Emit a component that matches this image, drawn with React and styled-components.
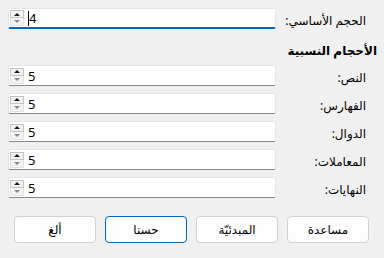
import styled, { createGlobalStyle } from "styled-components";

const Global = createGlobalStyle`
    html, body {
        margin: 0;
        background: #f0f0f0;
    }
    #root {
        width: 384px;
        height: 258px;
    }
`

const Dialogo = styled.div`
    direction: rtl;
    width: 384px;
    height: 258px;
    box-sizing: border-box;
    padding: 8px 7px 0 8px;
    background: #f0f0f0;
    font-family: "Segoe UI", "Noto Sans", "DejaVu Sans", sans-serif;
    font-size: 12px;
    color: #000;
`

const Fila = styled.div`
    display: flex;
    align-items: center;
    height: 21px;
    padding-right: 11px;
    margin-top: ${(p) => p.$arriba ?? 7}px;
`

const Etiqueta = styled.label`
    width: 90px;
    flex-shrink: 0;
    text-align: right;
    white-space: nowrap;
    line-height: 21px;
    padding-top: 4px;
`

const Campo = styled.div`
    direction: ltr;
    flex: 1;
    height: 21px;
    box-sizing: border-box;
    display: flex;
    align-items: center;
    background: #fff;
    border: 1px solid #e5e5e5;
    border-bottom: ${(p) => (p.$activo ? "2px solid #0067c0" : "1px solid #878787")};
    border-radius: 2px;
    padding-left: 1px;
`

const Flechas = styled.div`
    display: flex;
    flex-direction: column;
    width: 14px;
    margin-right: 4px;
`

const Flecha = styled.span`
    height: 8px;
    box-sizing: border-box;
    display: flex;
    align-items: center;
    justify-content: center;
    background: #f3f3f3;
    border: 1px solid ${(p) => (p.$abajo ? "#e3e3e3" : "#c4c4c4")};
    border-top: ${(p) => (p.$abajo ? "none" : undefined)};

    &::after {
        content: "";
        border-left: 3px solid transparent;
        border-right: 3px solid transparent;
        ${(p) =>
            p.$abajo
                ? "border-top: 3px solid #8a8a8a;"
                : "border-bottom: 3px solid #1a1a1a;"}
    }
`

const Valor = styled.span`
    font-family: "Segoe UI", "Noto Sans", sans-serif;
    font-size: 13px;
    line-height: 18px;
`

const Cursor = styled.span`
    display: inline-block;
    width: 1px;
    height: 15px;
    background: #000;
    vertical-align: -3px;
`

const Titulo = styled.div`
    font-weight: bold;
    margin-top: 14px;
    line-height: 16px;
`

const Botones = styled.div`
    display: flex;
    gap: 9px;
    margin: 18px 8px 0 6px;
`

const Boton = styled.button`
    width: 82px;
    height: 27px;
    box-sizing: border-box;
    background: #fdfdfd;
    border: 1px solid ${(p) => (p.$principal ? "#0067c0" : "#d0d0d0")};
    border-radius: 4px;
    font: inherit;
    color: #000;
    padding: 0;
`

const CampoNumero = ({ valor, activo }) => (
    <Campo $activo={activo}>
        <Flechas>
            <Flecha />
            <Flecha $abajo />
        </Flechas>
        <Valor>
            {activo && <Cursor />}
            {valor}
        </Valor>
    </Campo>
)

const relativos = [
    ["النص:", 5],
    ["الفهارس:", 5],
    ["الدوال:", 5],
    ["المعاملات:", 5],
    ["النهايات:", 5],
]

const App = () => {
    return (
        <>
            <Global />
            <Dialogo>
                <Fila $arriba={0}>
                    <Etiqueta>الحجم الأساسي:</Etiqueta>
                    <CampoNumero valor={4} activo />
                </Fila>
                <Titulo>الأحجام النسبية</Titulo>
                {relativos.map(([nombre, valor], i) => (
                    <Fila key={nombre} $arriba={i === 0 ? 6 : 7}>
                        <Etiqueta>{nombre}</Etiqueta>
                        <CampoNumero valor={valor} />
                    </Fila>
                ))}
                <Botones>
                    <Boton>مساعدة</Boton>
                    <Boton>المبدئيّة</Boton>
                    <Boton $principal>حسنا</Boton>
                    <Boton>ألغ</Boton>
                </Botones>
            </Dialogo>
        </>
    )
}

export default App;
